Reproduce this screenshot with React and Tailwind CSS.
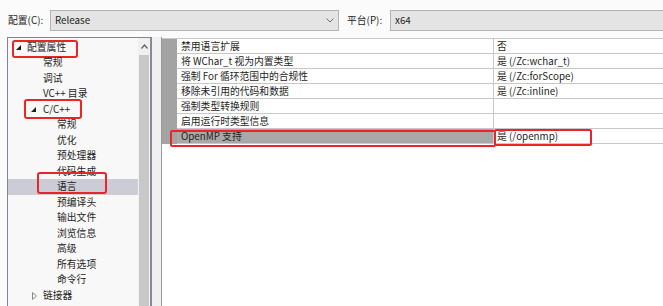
import React from "react";

const FONT = { fontFamily: '"Microsoft YaHei", "Noto Sans CJK SC", "Noto Sans", sans-serif' };

function DownTri() {
  return (
    <svg width="7" height="7" viewBox="0 0 7 7" className="shrink-0">
      <polygon points="6,1 6,6 1,6" fill="#1e1e1e" />
    </svg>
  );
}
function RightTri() {
  return (
    <svg width="7" height="8" viewBox="0 0 7 8" className="shrink-0">
      <polygon points="1.5,0.5 5.5,4 1.5,7.5" fill="none" stroke="#8a8a8a" strokeWidth="1" />
    </svg>
  );
}

const tree = [
  { label: "配置属性", marker: "down", mx: 7, tx: 19, box: "left-[4px] top-[0px] w-[66px] h-[18px]" },
  { label: "常规", tx: 35 },
  { label: "调试", tx: 35 },
  { label: "VC++ 目录", tx: 35 },
  { label: "C/C++", marker: "down", mx: 22, tx: 35, box: "left-[16px] top-[-3px] w-[58px] h-[20px]" },
  { label: "常规", tx: 49 },
  { label: "优化", tx: 49 },
  { label: "预处理器", tx: 49 },
  { label: "代码生成", tx: 49 },
  { label: "语言", tx: 49, sel: true, box: "left-[29px] top-[-7px] w-[70px] h-[22px]" },
  { label: "预编译头", tx: 49 },
  { label: "输出文件", tx: 49 },
  { label: "浏览信息", tx: 49 },
  { label: "高级", tx: 49 },
  { label: "所有选项", tx: 49 },
  { label: "命令行", tx: 49 },
  { label: "链接器", marker: "right", mx: 23, tx: 35 },
];

const rows = [
  ["禁用语言扩展", "否"],
  ["将 WChar_t 视为内置类型", "是 (/Zc:wchar_t)"],
  ["强制 For 循环范围中的合规性", "是 (/Zc:forScope)"],
  ["移除未引用的代码和数据", "是 (/Zc:inline)"],
  ["强制类型转换规则", ""],
  ["启用运行时类型信息", ""],
  ["OpenMP 支持", "是 (/openmp)", true],
];

export default function App() {
  return (
    <div className="w-[663px] h-[306px] bg-white overflow-hidden flex flex-col text-[9.8px] text-[#1e1e1e]" style={FONT}>
      {/* top bar */}
      <div className="h-[37px] shrink-0 flex items-start pt-[10px] bg-[#fbfbfb]">
        <div className="w-[50px] pl-[8px] h-[21px] flex items-center">配置(C):</div>
        <div className="w-[289px] h-[21px] border border-[#b4b4b4] bg-[#e4e4e4] flex items-center pl-[4px] pr-[4px]">
          <span className="flex-1">Release</span>
          <svg width="8" height="5" viewBox="0 0 8 5"><polyline points="0.5,0.5 4,4 7.5,0.5" fill="none" stroke="#707070" strokeWidth="1" /></svg>
        </div>
        <div className="w-[51px] pl-[8px] h-[21px] flex items-center">平台(P):</div>
        <div className="flex-1 h-[21px] border border-[#b4b4b4] border-r-0 bg-[#e4e4e4] flex items-center pl-[4px]">x64</div>
      </div>

      {/* main */}
      <div className="flex-1 flex min-h-0">
        <div className="w-[7px] shrink-0 bg-[#fbfbfb]" />
        {/* tree panel */}
        <div className="w-[145px] shrink-0 border border-b-0 border-[#828790] bg-[#f8f8f8] flex">
          <div className="flex-1 pt-[1.5px] relative">
            {tree.map((t, i) => (
              <div key={i} className={`relative h-[15.5px] flex items-center ${t.sel ? "bg-[#cbccd6]" : ""}`}>
                {t.marker && (
                  <span className="absolute top-[4px]" style={{ left: t.mx }}>
                    {t.marker === "down" ? <DownTri /> : <RightTri />}
                  </span>
                )}
                <span className="absolute whitespace-nowrap leading-[15.5px]" style={{ left: t.tx }}>{t.label}</span>
                {t.box && <span className={`absolute ${t.box} border-2 border-[#e8262a] rounded-[3px]`} />}
              </div>
            ))}
          </div>
          {/* scrollbar */}
          <div className="w-[13px] shrink-0 bg-[#f0f0f0] flex flex-col border-r border-[#8f8f8f]">
            <div className="h-[17px] flex items-center justify-center">
              <svg width="7" height="5" viewBox="0 0 7 5"><polyline points="0.5,4.5 3.5,1 6.5,4.5" fill="none" stroke="#606060" strokeWidth="1.2" /></svg>
            </div>
            <div className="flex-1 mx-[1px] bg-[#c8c8c8]" />
          </div>
        </div>
        <div className="w-[9px] shrink-0 bg-[#f0f0f0]" />
        {/* property grid */}
        <div className="flex-1 border-l border-[#9a9a9a] bg-white pt-[1px]">
          <div className="border-t border-[#c8c8c8]">
            {rows.map(([n, v, sel], i) => (
              <div key={i} className="relative h-[15px] flex">
                <div className="w-[15px] shrink-0 bg-[#a3a3a3]" />
                <div className={`w-[317px] shrink-0 border-r border-b border-[#c8c8c8] pl-[4px] leading-[14px] whitespace-nowrap ${sel ? "bg-[#a8a8a8]" : "bg-white"}`}>{n}</div>
                <div className="flex-1 border-b border-[#c8c8c8] pl-[3px] leading-[14px] whitespace-nowrap">{v}</div>
                {sel && (
                  <>
                    <span className="absolute left-[8px] top-[1px] w-[326px] h-[17px] border-2 border-[#e8262a] rounded-[2px]" />
                    <span className="absolute left-[332px] top-[0px] w-[98px] h-[17px] border-2 border-[#e8262a] rounded-[2px]" />
                  </>
                )}
              </div>
            ))}
          </div>
        </div>
      </div>
    </div>
  );
}
